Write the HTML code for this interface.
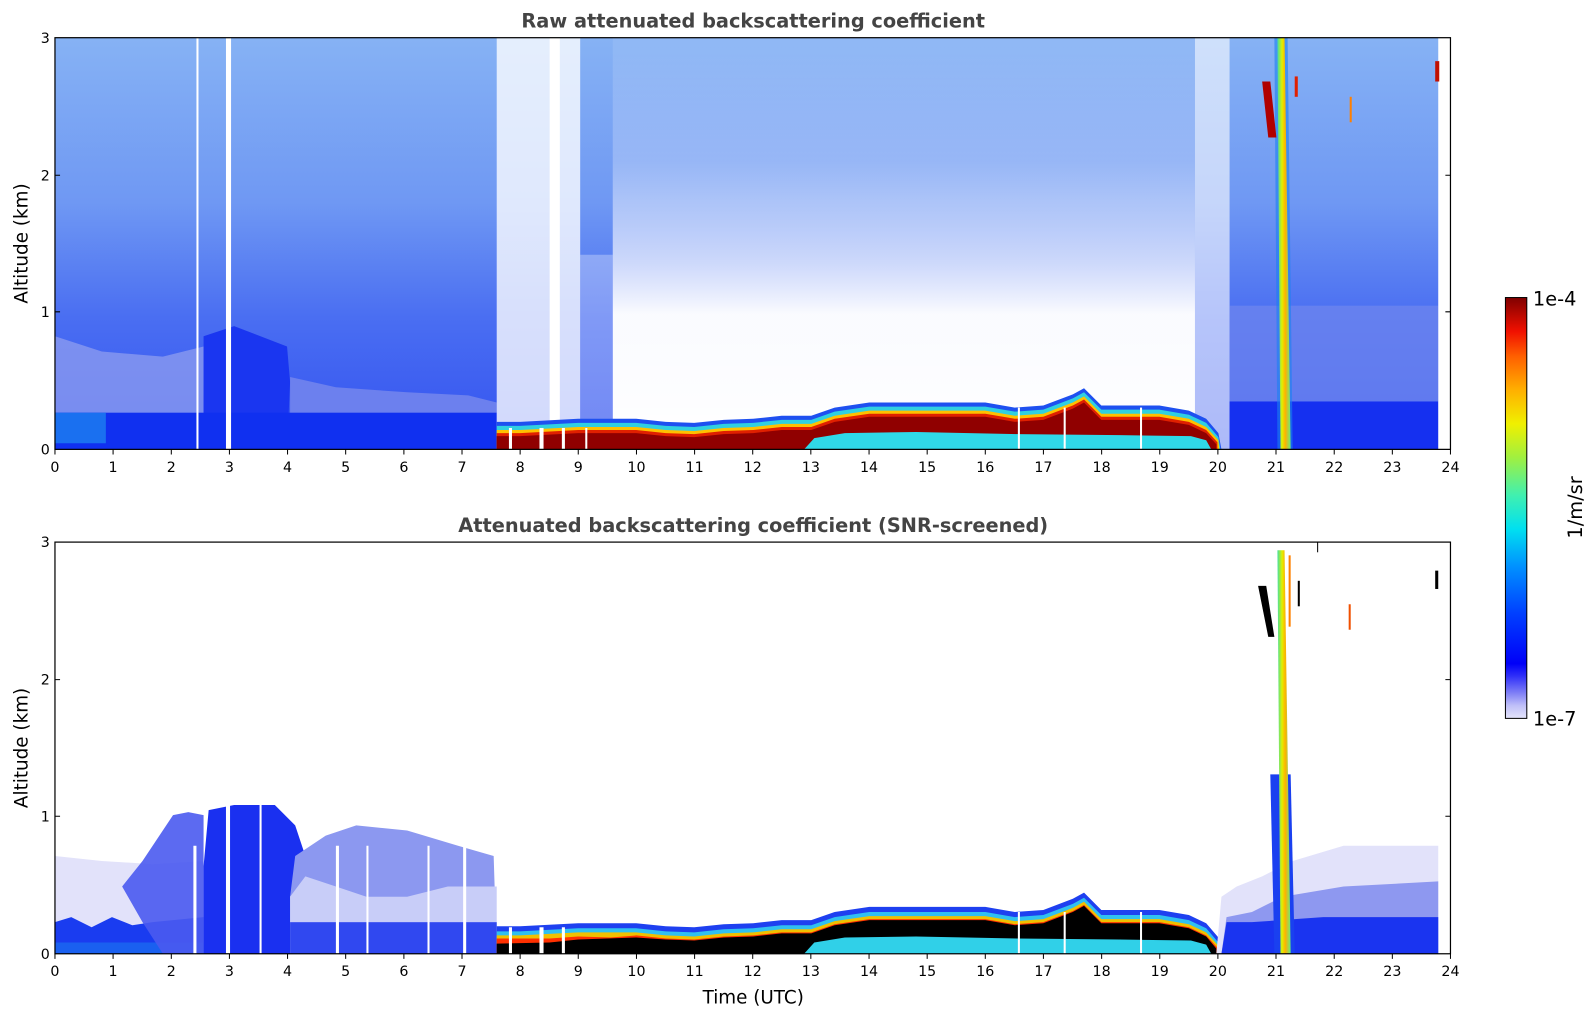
<!DOCTYPE html>
<html><head><meta charset="utf-8"><style>
html,body{margin:0;padding:0;background:#fff;width:1595px;height:1020px;overflow:hidden}
svg{display:block}
text{font-family:"DejaVu Sans","Liberation Sans",sans-serif;fill:#000}
</style></head><body>
<svg width="1595" height="1020" viewBox="0 0 1567 1001" preserveAspectRatio="none" xmlns="http://www.w3.org/2000/svg">
<defs>
<linearGradient id="gTop" x1="0" y1="37" x2="0" y2="441" gradientUnits="userSpaceOnUse">
<stop offset="0" stop-color="#86b2f4"/><stop offset="0.4" stop-color="#6f98f3"/><stop offset="0.68" stop-color="#4a6ef2"/><stop offset="1" stop-color="#3352f0"/>
</linearGradient>
<linearGradient id="gWhite" x1="0" y1="37" x2="0" y2="441" gradientUnits="userSpaceOnUse">
<stop offset="0" stop-color="#fff" stop-opacity="0.08"/><stop offset="0.3" stop-color="#fff" stop-opacity="0.25"/><stop offset="0.55" stop-color="#fff" stop-opacity="0.7"/><stop offset="0.67" stop-color="#fff" stop-opacity="0.97"/><stop offset="1" stop-color="#fff" stop-opacity="1"/>
</linearGradient>
<linearGradient id="gStripe" x1="0" y1="0" x2="1" y2="0">
<stop offset="0" stop-color="#40e0a0"/><stop offset="0.35" stop-color="#e0f000"/><stop offset="0.6" stop-color="#ffb000"/><stop offset="1" stop-color="#60f080"/>
</linearGradient>
<linearGradient id="gCb" x1="0" y1="1" x2="0" y2="0">
<stop offset="0" stop-color="#e4e4fa"/><stop offset="0.03" stop-color="#c0c0f8"/><stop offset="0.06" stop-color="#8080f6"/><stop offset="0.1" stop-color="#3030f8"/><stop offset="0.13" stop-color="#0000f8"/><stop offset="0.25" stop-color="#0040ff"/><stop offset="0.36" stop-color="#0090ff"/><stop offset="0.45" stop-color="#00e0f0"/><stop offset="0.53" stop-color="#40f0b0"/><stop offset="0.62" stop-color="#a0f040"/><stop offset="0.7" stop-color="#f0f000"/><stop offset="0.78" stop-color="#ffb000"/><stop offset="0.86" stop-color="#ff6000"/><stop offset="0.92" stop-color="#f01000"/><stop offset="1" stop-color="#800000"/>
</linearGradient>
<clipPath id="c1"><rect x="54" y="37" width="1371" height="404"/></clipPath>
<clipPath id="c2"><rect x="54" y="532" width="1371" height="404"/></clipPath>
</defs>

<g clip-path="url(#c1)">
<rect x="54" y="37" width="1371" height="404" fill="url(#gTop)"/>
<polygon points="54,330 100,345 160,350 200,340 200,407 54,407" fill="#8a9af0" opacity="0.8"/>
<polygon points="200,330 230,320 282,340 285,375 282,441 200,441" fill="#1a36f0"/>
<polygon points="285,370 330,380 400,385 460,388 488,395 488,441 285,441" fill="#6c80ee"/>
<rect x="54" y="405" width="434" height="36" fill="#1030f0"/>
<rect x="54" y="405" width="50" height="30" fill="#1a70f0"/>
<rect x="222" y="37" width="5" height="404" fill="#fff"/>
<rect x="193" y="37" width="2" height="404" fill="#fff"/>
<rect x="488" y="37" width="82" height="404" fill="#fff" opacity="0.78"/>
<rect x="540" y="37" width="10" height="404" fill="#fff"/>
<rect x="602" y="37" width="572" height="404" fill="url(#gWhite)"/>
<rect x="570" y="250" width="32" height="170" fill="#fff" opacity="0.3"/>
<rect x="1174" y="37" width="34" height="404" fill="#fff" opacity="0.6"/>
<rect x="1208" y="300" width="205" height="100" fill="#7088ee" opacity="0.7"/>
<rect x="1208" y="394" width="205" height="47" fill="#1530f0"/>
<rect x="1413" y="37" width="12" height="404" fill="#fff"/>
<polygon points="488,414 511,414 568,411 625,411 654,414 682,415 711,412 740,411 768,408 797,408 820,400 854,395 911,395 968,395 997,400 1025,398 1054,387 1065,381 1082,398 1139,398 1168,403 1185,411 1197,425 1200,441 488,441" fill="#1e50f0"/>
<polygon points="488,418 511,418 568,415 625,415 654,418 682,419 711,416 740,415 768,412 797,412 820,404 854,399 911,399 968,399 997,404 1025,402 1054,391 1065,385 1082,402 1139,402 1168,407 1185,415 1197,429 1199,441 488,441" fill="#30d0e0"/>
<polygon points="488,422 511,422 568,419 625,419 654,422 682,423 711,420 740,419 768,416 797,416 820,408 854,403 911,403 968,403 997,408 1025,406 1054,395 1065,389 1082,406 1139,406 1168,411 1185,419 1197,432 1198,441 488,441" fill="#ffc000"/>
<polygon points="488,425 511,425 568,422 625,422 654,425 682,426 711,423 740,422 768,419 797,419 820,411 854,406 911,406 968,406 997,411 1025,409 1054,398 1065,392 1082,409 1139,409 1168,414 1185,422 1196,434 1196,441 488,441" fill="#e02000"/>
<polygon points="488,428 511,428 568,425 625,425 654,428 682,429 711,426 740,425 768,422 797,422 820,414 854,409 911,409 968,409 997,414 1025,412 1054,401 1065,395 1082,412 1139,412 1168,417 1185,425 1195,436 1195,441 488,441" fill="#900000"/>
<polygon points="790,441 800,430 830,425 900,424 1000,426 1100,427 1170,428 1185,432 1190,441" fill="#30d8e8"/>
<g fill="#fff"><rect x="500" y="420" width="3" height="21"/><rect x="530" y="420" width="4" height="21"/><rect x="552" y="420" width="3" height="21"/><rect x="575" y="420" width="2" height="21"/><rect x="1000" y="400" width="2" height="41"/><rect x="1120" y="400" width="2" height="41"/><rect x="1045" y="400" width="2" height="41"/></g>
<polygon points="1252,37 1265,37 1270,441 1255,441" fill="#1a80f0" opacity="0.6"/>
<polygon points="1255,37 1262,37 1268,441 1258,441" fill="url(#gStripe)"/>
<polygon points="1240,80 1248,80 1254,135 1246,135" fill="#b00000"/>
<rect x="1272" y="75" width="3" height="20" fill="#e02000"/>
<rect x="1326" y="95" width="2" height="25" fill="#ff8000"/>
<rect x="1410" y="60" width="4" height="20" fill="#c01000"/>
</g>
<rect x="54" y="37" width="1371" height="404" fill="none" stroke="#000" stroke-width="1.2"/>

<g clip-path="url(#c2)">
<polygon points="54,840 100,845 150,848 200,845 200,936 54,936" fill="#e2e2fa"/>
<polygon points="54,905 70,900 90,910 110,900 130,908 150,905 200,900 200,936 54,936" fill="#1a3cf0"/>
<polygon points="54,925 200,925 200,936 54,936" fill="#1a60f0"/>
<polygon points="120,870 140,845 170,800 185,797 200,800 200,936 160,936 140,905" fill="#4a5af0" opacity="0.9"/>
<polygon points="200,850 205,795 230,790 270,790 290,810 300,840 285,880 290,936 200,936" fill="#1a30f0"/>
<polygon points="285,880 290,840 320,820 350,810 400,815 450,830 485,840 488,936 285,936" fill="#8c98f0"/>
<polygon points="285,880 300,860 330,870 360,880 400,880 440,870 488,870 488,936 285,936" fill="#c8cdf8"/>
<rect x="285" y="905" width="203" height="31" fill="#3048f0"/>
<g fill="#fff"><rect x="190" y="830" width="3" height="106"/><rect x="222" y="790" width="4" height="146"/><rect x="255" y="790" width="2" height="146"/><rect x="330" y="830" width="3" height="106"/><rect x="360" y="830" width="2" height="106"/><rect x="420" y="830" width="2" height="106"/><rect x="455" y="830" width="3" height="106"/></g>
<polygon points="488,909 511,909 568,906 625,906 654,909 682,910 711,907 740,906 768,903 797,903 820,895 854,890 911,890 968,890 997,895 1025,893 1054,882 1065,876 1082,893 1139,893 1168,898 1185,906 1197,920 1200,936 488,936" fill="#1e40f0"/>
<polygon points="488,914 511,914 568,911 625,911 654,914 682,915 711,912 740,911 768,908 797,908 820,900 854,895 911,895 968,895 997,900 1025,898 1054,887 1065,881 1082,898 1139,898 1168,903 1185,911 1197,925 1199,936 488,936" fill="#30c0f0"/>
<polygon points="488,918 511,918 568,915 625,915 654,918 682,919 711,916 740,915 768,912 797,912 820,904 854,899 911,899 968,899 997,904 1025,902 1054,891 1065,885 1082,902 1139,902 1168,907 1185,915 1197,928 1198,936 488,936" fill="#f0c000"/>
<polygon points="488,921 540,921 568,919 600,920 625,918 654,921 682,922 711,919 740,918 768,915 797,915 820,907 854,902 911,902 968,902 997,907 1025,905 1054,894 1065,888 1082,905 1139,905 1168,910 1185,918 1196,930 1196,936 488,936" fill="#ff3000"/>
<polygon points="488,926 540,925 568,922 625,920 654,922 682,923 711,920 740,919 768,916 797,916 820,908 854,903 911,903 968,903 997,908 1025,906 1054,895 1065,889 1082,906 1139,906 1168,911 1185,919 1195,931 1195,936 488,936" fill="#000"/>
<polygon points="790,936 800,925 830,920 900,919 1000,921 1100,922 1170,923 1185,927 1190,936" fill="#30d0e8"/>
<g fill="#fff"><rect x="500" y="910" width="3" height="26"/><rect x="530" y="910" width="4" height="26"/><rect x="552" y="910" width="3" height="26"/><rect x="1000" y="895" width="2" height="41"/><rect x="1045" y="895" width="2" height="41"/><rect x="1120" y="895" width="2" height="41"/></g>
<polygon points="1195,936 1200,880 1215,870 1240,860 1270,845 1320,830 1413,830 1413,936" fill="#e2e2fa"/>
<polygon points="1200,936 1205,900 1230,895 1260,880 1320,870 1413,865 1413,936" fill="#8e98f0"/>
<polygon points="1200,936 1205,905 1230,905 1300,900 1413,900 1413,936" fill="#1a34f0"/>
<polygon points="1248,760 1268,760 1272,936 1252,936" fill="#1a40f0"/>
<polygon points="1255,540 1262,540 1268,936 1258,936" fill="url(#gStripe)"/>
<polygon points="1236,575 1244,575 1252,625 1246,625" fill="#000"/>
<rect x="1266" y="545" width="2" height="70" fill="#ff8000"/>
<rect x="1275" y="570" width="2" height="25" fill="#000"/>
<rect x="1325" y="593" width="2" height="25" fill="#f05000"/>
<rect x="1410" y="560" width="3" height="18" fill="#000"/>
<rect x="1294" y="532" width="1" height="10" fill="#000"/>
</g>
<rect x="54" y="532" width="1371" height="404" fill="none" stroke="#000" stroke-width="1.2"/>

<g stroke="#000" stroke-width="1">
<path d="M54,441v5M111.1,441v5M168.3,441v5M225.4,441v5M282.5,441v5M339.6,441v5M396.8,441v5M453.9,441v5M511,441v5M568.1,441v5M625.3,441v5M682.4,441v5M739.5,441v5M796.6,441v5M853.8,441v5M910.9,441v5M968,441v5M1025.1,441v5M1082.3,441v5M1139.4,441v5M1196.5,441v5M1253.6,441v5M1310.8,441v5M1367.9,441v5M1425,441v5"/>
<path d="M54,936v5M111.1,936v5M168.3,936v5M225.4,936v5M282.5,936v5M339.6,936v5M396.8,936v5M453.9,936v5M511,936v5M568.1,936v5M625.3,936v5M682.4,936v5M739.5,936v5M796.6,936v5M853.8,936v5M910.9,936v5M968,936v5M1025.1,936v5M1082.3,936v5M1139.4,936v5M1196.5,936v5M1253.6,936v5M1310.8,936v5M1367.9,936v5M1425,936v5"/>
<path d="M1425,306h-5M1425,172h-5M1425,801h-5M1425,667h-5M54,306h5M54,172h5M54,801h5M54,667h5"/>
</g>
<g font-size="14" text-anchor="middle">
<text x="54" y="463">0</text><text x="111.1" y="463">1</text><text x="168.3" y="463">2</text><text x="225.4" y="463">3</text><text x="282.5" y="463">4</text><text x="339.6" y="463">5</text><text x="396.8" y="463">6</text><text x="453.9" y="463">7</text><text x="511" y="463">8</text><text x="568.1" y="463">9</text><text x="625.3" y="463">10</text><text x="682.4" y="463">11</text><text x="739.5" y="463">12</text><text x="796.6" y="463">13</text><text x="853.8" y="463">14</text><text x="910.9" y="463">15</text><text x="968" y="463">16</text><text x="1025.1" y="463">17</text><text x="1082.3" y="463">18</text><text x="1139.4" y="463">19</text><text x="1196.5" y="463">20</text><text x="1253.6" y="463">21</text><text x="1310.8" y="463">22</text><text x="1367.9" y="463">23</text><text x="1425" y="463">24</text>
<text x="54" y="958">0</text><text x="111.1" y="958">1</text><text x="168.3" y="958">2</text><text x="225.4" y="958">3</text><text x="282.5" y="958">4</text><text x="339.6" y="958">5</text><text x="396.8" y="958">6</text><text x="453.9" y="958">7</text><text x="511" y="958">8</text><text x="568.1" y="958">9</text><text x="625.3" y="958">10</text><text x="682.4" y="958">11</text><text x="739.5" y="958">12</text><text x="796.6" y="958">13</text><text x="853.8" y="958">14</text><text x="910.9" y="958">15</text><text x="968" y="958">16</text><text x="1025.1" y="958">17</text><text x="1082.3" y="958">18</text><text x="1139.4" y="958">19</text><text x="1196.5" y="958">20</text><text x="1253.6" y="958">21</text><text x="1310.8" y="958">22</text><text x="1367.9" y="958">23</text><text x="1425" y="958">24</text>
</g>
<g font-size="14" text-anchor="end">
<text x="49" y="446">0</text><text x="49" y="311">1</text><text x="49" y="177">2</text><text x="49" y="42">3</text>
<text x="49" y="941">0</text><text x="49" y="806">1</text><text x="49" y="672">2</text><text x="49" y="537">3</text>
</g>
<text x="740" y="985" font-size="18" text-anchor="middle">Time (UTC)</text>
<text transform="translate(27,239) rotate(-90)" font-size="18" text-anchor="middle">Altitude (km)</text>
<text transform="translate(27,734) rotate(-90)" font-size="18" text-anchor="middle">Altitude (km)</text>
<text x="740" y="27" font-size="19" font-weight="bold" text-anchor="middle" style="fill:#444">Raw attenuated backscattering coefficient</text>
<text x="740" y="522" font-size="19" font-weight="bold" text-anchor="middle" style="fill:#444">Attenuated backscattering coefficient (SNR-screened)</text>

<rect x="1479" y="292" width="21" height="413" fill="url(#gCb)" stroke="#000" stroke-width="1"/>
<text x="1506" y="300" font-size="19">1e-4</text>
<text x="1506" y="712" font-size="19">1e-7</text>
<text transform="translate(1554,498) rotate(-90)" font-size="19" text-anchor="middle">1/m/sr</text>
</svg>
</body></html>
